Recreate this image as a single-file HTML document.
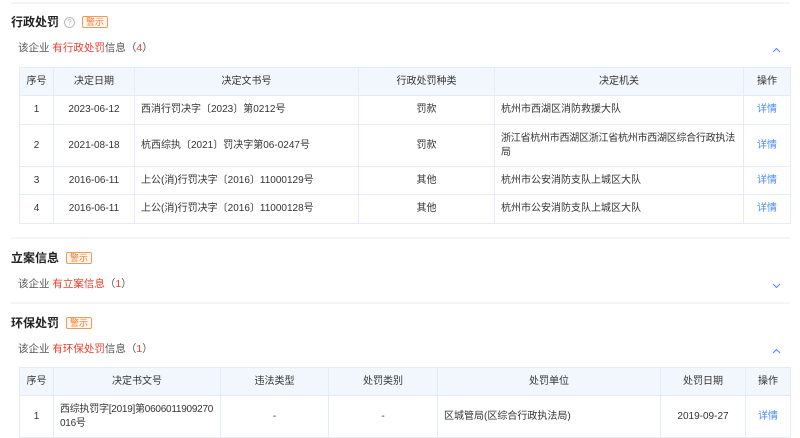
<!DOCTYPE html>
<html><head><meta charset="utf-8"><style>
*{margin:0;padding:0;box-sizing:border-box}
body{width:800px;height:432px;overflow:hidden;background:#fff;font-family:"Liberation Sans","Noto Sans CJK SC",sans-serif;color:#333;position:relative}
.sep{position:absolute;left:11px;width:779px;height:2px;background:#f3f4f6}
.title{position:absolute;left:11px;font-size:12px;font-weight:bold;color:#222;line-height:14px}
.tag{display:inline-block;vertical-align:1px;margin-left:7px;border:1px solid #f09a5a;color:#f07c2a;font-size:9px;font-weight:normal;line-height:10px;padding:0 3px;border-radius:2px;background:#fff8f2}
.q{display:inline-block;width:11px;height:11px;border:1px solid #bbb;border-radius:50%;color:#bbb;font-size:8px;line-height:9px;text-align:center;font-weight:normal;vertical-align:1px;margin-left:5px}
.sub{position:absolute;left:18px;font-size:10.5px;color:#555;line-height:14px}
.sub b{font-weight:normal;color:#e8402f}
.arr{position:absolute;left:772px}
table{position:absolute;left:19px;width:771px;border-collapse:collapse;font-size:10px;color:#333;table-layout:fixed}
td,th{border:1px solid #e3ecf8;text-align:center;font-weight:normal;padding:0 4px;line-height:14px;word-break:break-all}
th{background:#f2f7fd;height:28px}
td.l{text-align:left;padding-left:6px;padding-right:2px}
td.t{letter-spacing:-0.25px}
a{color:#4a8af4;text-decoration:none}
</style></head><body>
<div class="sep" style="top:2px"></div>
<div class="title" style="top:15px">行政处罚<span class="q">?</span><span class="tag">警示</span></div>
<div class="sub" style="top:41px">该企业 <b>有行政处罚</b>信息（<b>4</b>）</div>
<svg class="arr" style="top:47px" width="9" height="6"><path d="M1 5L4.5 1.5L8 5" stroke="#4a8af4" fill="none" stroke-width="1"/></svg>
<table style="top:67px">
<colgroup><col style="width:34px"><col style="width:81px"><col style="width:224px"><col style="width:136px"><col style="width:249px"><col style="width:47px"></colgroup>
<tr><th>序号</th><th>决定日期</th><th>决定文书号</th><th>行政处罚种类</th><th>决定机关</th><th>操作</th></tr>
<tr style="height:29px"><td>1</td><td>2023-06-12</td><td class="l">西消行罚决字〔2023〕第0212号</td><td>罚款</td><td class="l">杭州市西湖区消防救援大队</td><td><a>详情</a></td></tr>
<tr style="height:42px"><td>2</td><td>2021-08-18</td><td class="l">杭西综执〔2021〕罚决字第06-0247号</td><td>罚款</td><td class="l t">浙江省杭州市西湖区浙江省杭州市西湖区综合行政执法局</td><td><a>详情</a></td></tr>
<tr style="height:28px"><td>3</td><td>2016-06-11</td><td class="l">上公(消)行罚决字〔2016〕11000129号</td><td>其他</td><td class="l">杭州市公安消防支队上城区大队</td><td><a>详情</a></td></tr>
<tr style="height:29px"><td>4</td><td>2016-06-11</td><td class="l">上公(消)行罚决字〔2016〕11000128号</td><td>其他</td><td class="l">杭州市公安消防支队上城区大队</td><td><a>详情</a></td></tr>
</table>
<div class="sep" style="top:237px"></div>
<div class="title" style="top:251px">立案信息<span class="tag">警示</span></div>
<div class="sub" style="top:277px">该企业 <b>有立案信息</b>（<b>1</b>）</div>
<svg class="arr" style="top:283px" width="9" height="6"><path d="M1 1L4.5 4.5L8 1" stroke="#4a8af4" fill="none" stroke-width="1"/></svg>
<div class="sep" style="top:302px"></div>
<div class="title" style="top:316px">环保处罚<span class="tag">警示</span></div>
<div class="sub" style="top:342px">该企业 <b>有环保处罚</b>信息（<b>1</b>）</div>
<svg class="arr" style="top:348px" width="9" height="6"><path d="M1 5L4.5 1.5L8 5" stroke="#4a8af4" fill="none" stroke-width="1"/></svg>
<table style="top:367px">
<colgroup><col style="width:34px"><col style="width:167px"><col style="width:108px"><col style="width:109px"><col style="width:223px"><col style="width:85px"><col style="width:45px"></colgroup>
<tr><th>序号</th><th>决定书文号</th><th>违法类型</th><th>处罚类别</th><th>处罚单位</th><th>处罚日期</th><th>操作</th></tr>
<tr style="height:42px"><td>1</td><td class="l t">西综执罚字[2019]第0606011909270016号</td><td>-</td><td>-</td><td class="l">区城管局(区综合行政执法局)</td><td>2019-09-27</td><td><a>详情</a></td></tr>
</table>
</body></html>
